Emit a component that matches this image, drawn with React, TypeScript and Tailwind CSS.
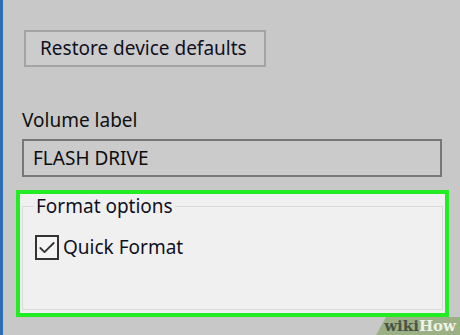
import { Check } from 'lucide-react';

const font = { fontFamily: '"Noto Sans", "Open Sans", sans-serif' };

const App = () => {
    return (
        <div
            className="relative w-[460px] h-[335px] overflow-hidden bg-[#c8c8c8] border-l-[3px] border-[#2f6db5] text-[#111] flex flex-col"
            style={font}
        >
            {/* Restore button */}
            <div className="pt-[30px] pl-[21px]">
                <div className="w-[242px] h-[37px] border-2 border-[#a3a3a3] bg-[#cccccc] flex items-center pl-[14px] text-[19px] leading-none text-[#10101e]">
                    Restore device defaults
                </div>
            </div>

            {/* Volume label */}
            <div className="pl-[19px] mt-[44px] text-[19px] leading-none text-[#101010]">Volume label</div>
            <div className="ml-[19px] mt-[9px] w-[420px] h-[38px] border-2 border-[#777] bg-[#cbcbcb] flex items-center pl-[9px] text-[19px] leading-none text-[#0c0c0c]">
                FLASH DRIVE
            </div>

            {/* Format options group, highlighted */}
            <div className="ml-[13px] mt-[13px] w-[433px] h-[127px] border-4 border-[#22ec22] bg-[#f0f0f0] px-[2px] pb-[3px] flex flex-col">
                <fieldset className="flex-1 min-h-0 border border-[#d9d9d9] pl-[12px] pr-2 m-0 mt-[3px]">
                    <legend className="px-[2px] text-[19px] leading-none text-[#10101e] -ml-[1px]">Format options</legend>
                    <div className="flex items-center mt-[19px] gap-[4px]">
                        <div className="w-[24px] h-[25px] border-2 border-[#333] bg-[#f4f4f4] flex items-center justify-center">
                            <Check size={20} strokeWidth={2.2} className="text-[#333]" />
                        </div>
                        <span className="text-[19px] leading-none text-[#10101e]">Quick Format</span>
                    </div>
                </fieldset>
            </div>

            {/* wikiHow watermark */}
            <div className="absolute right-0 bottom-0 w-[84px] h-[18px] bg-[#9cb085] [clip-path:polygon(10px_0,100%_0,100%_100%,0_100%)] flex items-center justify-end pr-[4px]">
                <span className="text-[15px] font-bold leading-none" style={{ fontFamily: '"DejaVu Serif", "Liberation Serif", serif' }}>
                    <span className="text-[#4a5444]">wiki</span>
                    <span className="text-[#eef2e8]">How</span>
                </span>
            </div>
        </div>
    );
};

export default App;
